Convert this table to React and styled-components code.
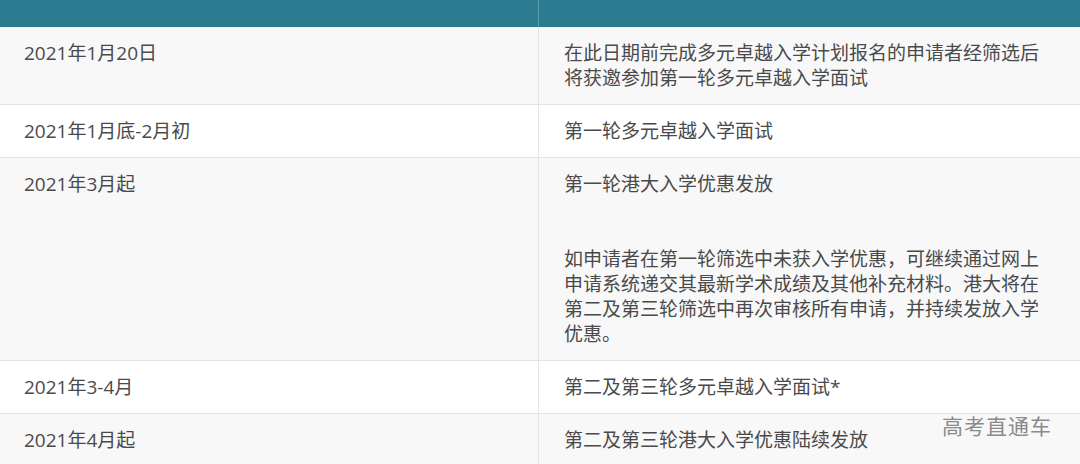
import React from 'react';
import styled, { createGlobalStyle } from 'styled-components';

const GlobalStyle = createGlobalStyle`
  html, body {
    margin: 0;
    padding: 0;
    background: #ffffff;
  }
  body {
    font-family: 'Open Sans', 'Noto Sans CJK SC', sans-serif;
    overflow: hidden;
  }
`;

const rows = [
  {
    date: '2021年1月20日',
    lines: ['在此日期前完成多元卓越入学计划报名的申请者经筛选后', '将获邀参加第一轮多元卓越入学面试'],
  },
  { date: '2021年1月底-2月初', lines: ['第一轮多元卓越入学面试'] },
  {
    date: '2021年3月起',
    lines: [
      '第一轮港大入学优惠发放',
      '',
      '',
      '如申请者在第一轮筛选中未获入学优惠，可继续通过网上',
      '申请系统递交其最新学术成绩及其他补充材料。港大将在',
      '第二及第三轮筛选中再次审核所有申请，并持续发放入学',
      '优惠。',
    ],
  },
  { date: '2021年3-4月', lines: ['第二及第三轮多元卓越入学面试*'] },
  { date: '2021年4月起', lines: ['第二及第三轮港大入学优惠陆续发放'] },
];

function App() {
  return (
    <Page>
      <GlobalStyle />
      <Table>
        <HeadRow>
          <HeadCell />
          <HeadCell $last />
        </HeadRow>
        {rows.map((row, i) => (
          <Row key={row.date} $striped={i % 2 === 0}>
            <DateCell>{row.date}</DateCell>
            <TextCell>
              {row.lines.map((line, j) => (
                <Line key={j}>{line || '\u00a0'}</Line>
              ))}
            </TextCell>
          </Row>
        ))}
      </Table>
      <Watermark>高考直通车</Watermark>
    </Page>
  );
}

export default App;

const Page = styled.div`
  position: relative;
  width: 1080px;
  height: 464px;
  overflow: hidden;
`;

const Table = styled.div`
  display: flex;
  flex-direction: column;
  width: 1100px;
`;

const HeadRow = styled.div`
  display: grid;
  grid-template-columns: 539px 1fr;
  height: 27px;
  background: #2c7c91;
`;

const HeadCell = styled.div`
  border-right: ${(p) => (p.$last ? 'none' : '1px solid #5a9aab')};
`;

const Row = styled.div`
  display: grid;
  grid-template-columns: 539px 1fr;
  background: ${(p) => (p.$striped ? '#f8f8f8' : '#ffffff')};
  border-bottom: 1px solid #e4e4e4;
  color: #4a4a4a;
  font-size: 19px;
  line-height: 25px;
`;

const DateCell = styled.div`
  padding: 14px 24px 13px 24px;
  border-right: 1px solid #e6e6e6;
`;

const TextCell = styled.div`
  padding: 14px 24px 13px 25px;
  display: flex;
  flex-direction: column;
`;

const Line = styled.div`
  white-space: nowrap;
`;

const Watermark = styled.div`
  position: absolute;
  left: 942px;
  top: 411px;
  font-family: 'Noto Sans CJK SC', sans-serif;
  font-size: 21px;
  line-height: 28px;
  color: #8a8a8a;
  letter-spacing: 1px;
`;
